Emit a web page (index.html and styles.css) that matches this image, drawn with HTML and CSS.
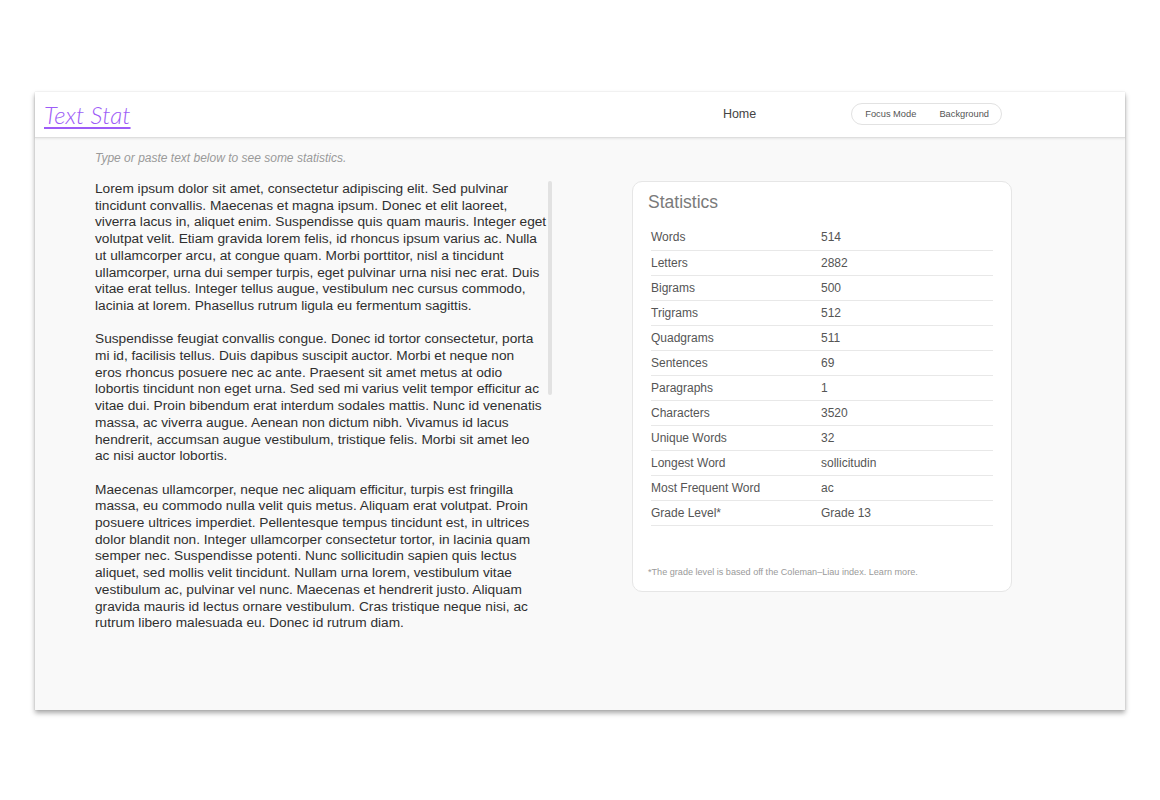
FILE: index.html
```html
<!DOCTYPE html>
<html lang="en">
<head>
<meta charset="utf-8">
<title>Text Stat</title>
<link rel="stylesheet" href="styles.css">
</head>
<body>
<div class="app">
  <header class="topbar">
    <a class="logo" href="#">Text Stat</a>
    <nav class="nav">
      <a class="nav-link" href="#">Home</a>
      <div class="pill">
        <span class="pill-item">Focus Mode</span>
        <span class="pill-item">Background</span>
      </div>
    </nav>
  </header>
  <main class="main">
    <p class="hint">Type or paste text below to see some statistics.</p>
    <div class="content">
      <div class="editor">
        <p class="para">Lorem ipsum dolor sit amet, consectetur adipiscing elit. Sed pulvinar<br>
tincidunt convallis. Maecenas et magna ipsum. Donec et elit laoreet,<br>
viverra lacus in, aliquet enim. Suspendisse quis quam mauris. Integer eget<br>
volutpat velit. Etiam gravida lorem felis, id rhoncus ipsum varius ac. Nulla<br>
ut ullamcorper arcu, at congue quam. Morbi porttitor, nisl a tincidunt<br>
ullamcorper, urna dui semper turpis, eget pulvinar urna nisi nec erat. Duis<br>
vitae erat tellus. Integer tellus augue, vestibulum nec cursus commodo,<br>
lacinia at lorem. Phasellus rutrum ligula eu fermentum sagittis.</p>
        <p class="para">Suspendisse feugiat convallis congue. Donec id tortor consectetur, porta<br>
mi id, facilisis tellus. Duis dapibus suscipit auctor. Morbi et neque non<br>
eros rhoncus posuere nec ac ante. Praesent sit amet metus at odio<br>
lobortis tincidunt non eget urna. Sed sed mi varius velit tempor efficitur ac<br>
vitae dui. Proin bibendum erat interdum sodales mattis. Nunc id venenatis<br>
massa, ac viverra augue. Aenean non dictum nibh. Vivamus id lacus<br>
hendrerit, accumsan augue vestibulum, tristique felis. Morbi sit amet leo<br>
ac nisi auctor lobortis.</p>
        <p class="para">Maecenas ullamcorper, neque nec aliquam efficitur, turpis est fringilla<br>
massa, eu commodo nulla velit quis metus. Aliquam erat volutpat. Proin<br>
posuere ultrices imperdiet. Pellentesque tempus tincidunt est, in ultrices<br>
dolor blandit non. Integer ullamcorper consectetur tortor, in lacinia quam<br>
semper nec. Suspendisse potenti. Nunc sollicitudin sapien quis lectus<br>
aliquet, sed mollis velit tincidunt. Nullam urna lorem, vestibulum vitae<br>
vestibulum ac, pulvinar vel nunc. Maecenas et hendrerit justo. Aliquam<br>
gravida mauris id lectus ornare vestibulum. Cras tristique neque nisi, ac<br>
rutrum libero malesuada eu. Donec id rutrum diam.</p>
        <span class="scroll-thumb"></span>
      </div>
      <section class="card">
        <h2 class="card-title">Statistics</h2>
        <table class="stats">
          <tr><td class="label">Words</td><td>514</td></tr>
          <tr><td class="label">Letters</td><td>2882</td></tr>
          <tr><td class="label">Bigrams</td><td>500</td></tr>
          <tr><td class="label">Trigrams</td><td>512</td></tr>
          <tr><td class="label">Quadgrams</td><td>511</td></tr>
          <tr><td class="label">Sentences</td><td>69</td></tr>
          <tr><td class="label">Paragraphs</td><td>1</td></tr>
          <tr><td class="label">Characters</td><td>3520</td></tr>
          <tr><td class="label">Unique Words</td><td>32</td></tr>
          <tr><td class="label">Longest Word</td><td>sollicitudin</td></tr>
          <tr><td class="label">Most Frequent Word</td><td>ac</td></tr>
          <tr><td class="label">Grade Level*</td><td>Grade 13</td></tr>
        </table>
        <p class="footnote">*The grade level is based off the Coleman–Liau index. Learn more.</p>
      </section>
    </div>
  </main>
</div>
</body>
</html>
```

FILE: styles.css
```css
* { box-sizing: border-box; }

html, body {
  margin: 0;
  padding: 0;
  background: #ffffff;
  font-family: "Liberation Sans", Arial, sans-serif;
}

body {
  padding: 92px 35px 90px;
}

.app {
  height: 618px;
  display: flex;
  flex-direction: column;
  background: #f9f9f9;
  box-shadow: 0 3px 5px rgba(0, 0, 0, 0.35), 0 0 1px rgba(0, 0, 0, 0.15);
}

.topbar {
  height: 46px;
  flex: none;
  display: flex;
  align-items: center;
  justify-content: space-between;
  padding: 0 123px 0 9px;
  background: #ffffff;
  border-bottom: 1px solid #dedede;
  box-shadow: 0 1px 2px rgba(0, 0, 0, 0.08);
  position: relative;
  z-index: 1;
}

.logo {
  font-family: Lato, "Liberation Sans", sans-serif;
  font-weight: 300;
  font-style: italic;
  font-size: 24px;
  letter-spacing: 0.1px;
  color: #9d5cf7;
  text-decoration: underline;
  text-decoration-thickness: 2px;
  text-underline-offset: 3px;
}

.nav {
  display: flex;
  align-items: center;
  gap: 95px;
}

.nav-link {
  font-size: 12.5px;
  color: #444;
  text-decoration: none;
  margin-top: -1px;
}

.pill {
  display: flex;
  align-items: center;
  height: 22px;
  padding: 0 12px 0 13px;
  gap: 23px;
  border: 1px solid #e2e2e2;
  border-radius: 11px;
  background: #fff;
  margin-top: -1px;
}

.pill-item {
  font-size: 9.3px;
  color: #555;
}

.main {
  flex: 1;
  padding: 13px 113px 0 60px;
}

.hint {
  margin: 0 0 15px;
  font-size: 12px;
  line-height: 15px;
  font-style: italic;
  color: #9a9a9a;
}

.content {
  display: flex;
  align-items: flex-start;
  gap: 80px;
}

.editor {
  position: relative;
  width: 457px;
  flex: none;
}

.para {
  margin: 0 0 16.7px;
  font-size: 13.7px;
  line-height: 16.7px;
  color: #2f2f2f;
  white-space: nowrap;
}

.para:last-of-type { margin-bottom: 0; }

.scroll-thumb {
  position: absolute;
  top: 0;
  right: 0;
  width: 4px;
  height: 214px;
  border-radius: 2px;
  background: #e2e2e2;
}

.card {
  width: 380px;
  flex: none;
  background: #ffffff;
  border: 1px solid #e6e6e6;
  border-radius: 10px;
  padding: 9px 18px 13px 15px;
}

.card-title {
  margin: 0 0 12px;
  font-size: 17.5px;
  line-height: 22px;
  font-weight: normal;
  color: #7a7a7a;
}

.stats {
  width: calc(100% - 3px);
  margin-left: 3px;
  border-collapse: collapse;
}

.stats td {
  height: 25px;
  padding: 0;
  font-size: 12px;
  color: #555;
  border-bottom: 1px solid #e8e8e8;
  vertical-align: middle;
}

.stats td.label { width: 170px; }

.footnote {
  margin: 41px 0 0;
  font-size: 9.1px;
  line-height: 11px;
  color: #9a9a9a;
}
```
